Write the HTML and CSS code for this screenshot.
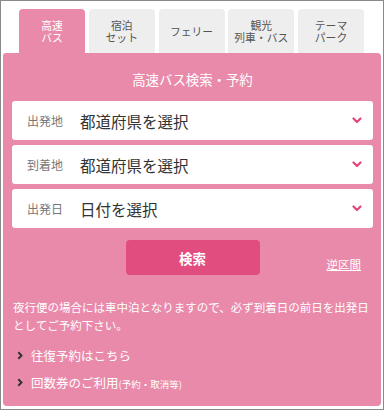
FILE: index.html
```html
<!DOCTYPE html>
<html lang="ja">
<head>
<meta charset="utf-8">
<link rel="stylesheet" href="styles.css">
</head>
<body>
<div class="frame">
  <div class="tabs">
    <div class="tab active"><span>高速</span><span>バス</span></div>
    <div class="tab"><span>宿泊</span><span>セット</span></div>
    <div class="tab"><span>フェリー</span></div>
    <div class="tab"><span>観光</span><span>列車・バス</span></div>
    <div class="tab"><span>テーマ</span><span>パーク</span></div>
  </div>
  <div class="panel">
    <h1 class="title">高速バス検索・予約</h1>
    <div class="fields">
      <div class="field">
        <span class="label">出発地</span>
        <span class="value">都道府県を選択</span>
        <svg class="chev" width="10" height="7" viewBox="0 0 10 7"><path d="M1.5 1.5 L5 5 L8.5 1.5" fill="none" stroke="#e2467c" stroke-width="2.2" stroke-linecap="round" stroke-linejoin="round"/></svg>
      </div>
      <div class="field">
        <span class="label">到着地</span>
        <span class="value">都道府県を選択</span>
        <svg class="chev" width="10" height="7" viewBox="0 0 10 7"><path d="M1.5 1.5 L5 5 L8.5 1.5" fill="none" stroke="#e2467c" stroke-width="2.2" stroke-linecap="round" stroke-linejoin="round"/></svg>
      </div>
      <div class="field">
        <span class="label">出発日</span>
        <span class="value">日付を選択</span>
        <svg class="chev" width="10" height="7" viewBox="0 0 10 7"><path d="M1.5 1.5 L5 5 L8.5 1.5" fill="none" stroke="#e2467c" stroke-width="2.2" stroke-linecap="round" stroke-linejoin="round"/></svg>
      </div>
    </div>
    <div class="actions">
      <span></span>
      <button class="search">検索</button>
      <a class="reverse" href="#">逆区間</a>
    </div>
    <p class="note">夜行便の場合には車中泊となりますので、必ず到着日の前日を出発日としてご予約下さい。</p>
    <ul class="links">
      <li><svg class="arrow" width="6" height="9" viewBox="0 0 6 9"><path d="M1.3 1.2 L4.5 4.5 L1.3 7.8" fill="none" stroke="#333" stroke-width="2"/></svg>往復予約はこちら</li>
      <li><svg class="arrow" width="6" height="9" viewBox="0 0 6 9"><path d="M1.3 1.2 L4.5 4.5 L1.3 7.8" fill="none" stroke="#333" stroke-width="2"/></svg>回数券のご利用<small>(予約・取消等)</small></li>
    </ul>
  </div>
</div>
</body>
</html>
```
FILE: styles.css
```css
html, body {
  margin: 0;
  padding: 0;
  background: #fff;
}
body {
  font-family: "Noto Sans CJK JP", "Noto Sans", sans-serif;
}
.frame {
  box-sizing: border-box;
  width: 384px;
  height: 410px;
  border: 1px solid #8a8a8a;
  padding: 8px 2px 3px 2px;
  display: flex;
  flex-direction: column;
}
.tabs {
  display: flex;
  gap: 3.75px;
  padding-left: 16px;
  height: 44px;
}
.tab {
  width: 66px;
  background: #eeeeee;
  border-radius: 4px 4px 0 0;
  color: #555;
  font-size: 10.8px;
  display: flex;
  flex-direction: column;
  align-items: center;
  justify-content: center;
  gap: 0;
  text-align: center;
  padding-top: 1px;
  box-sizing: border-box;
}
.tab span {
  display: block;
  height: 11.5px;
  line-height: 11.5px;
  white-space: nowrap;
}
.tab.active {
  background: #e98aab;
  color: #fff;
}
.panel {
  flex: 1;
  background: #e98aab;
  border-radius: 3px 4px 4px 4px;
  padding: 16px 8px 0 9px;
}
.title {
  margin: 0;
  font-size: 13.4px;
  font-weight: normal;
  line-height: 20px;
  color: #fff;
  text-align: center;
}
.fields {
  margin-top: 12px;
  display: flex;
  flex-direction: column;
  gap: 5px;
}
.field {
  height: 39px;
  background: #fff;
  border-radius: 3px;
  display: flex;
  align-items: center;
  padding: 0 11px 0 15px;
}
.label {
  width: 53px;
  font-size: 12px;
  color: #777;
}
.value {
  flex: 1;
  font-size: 15.5px;
  color: #333;
}
.chev {
  display: block;
}
.actions {
  margin-top: 12px;
  display: grid;
  grid-template-columns: 1fr 134px 1fr;
  align-items: end;
}
.search {
  height: 35px;
  border: none;
  border-radius: 4px;
  background: #e14d7f;
  color: #fff;
  font-family: inherit;
  font-size: 13.5px;
  font-weight: bold;
}
.reverse {
  justify-self: end;
  margin-right: 12px;
  margin-bottom: 3px;
  font-size: 11.5px;
  color: #fff;
  text-decoration: underline;
}
.note {
  margin: 23px 0 0 1px;
  font-size: 11.5px;
  line-height: 18px;
  color: #fff;
}
.links {
  list-style: none;
  margin: 8px 0 0 0;
  padding: 0;
}
.links li {
  display: flex;
  align-items: center;
  height: 27px;
  font-size: 12.5px;
  color: #fff;
}
.arrow {
  margin: 0 8px 0 5px;
  display: block;
}
.links small {
  font-size: 9.5px;
  margin-top: 3px;
}
```
